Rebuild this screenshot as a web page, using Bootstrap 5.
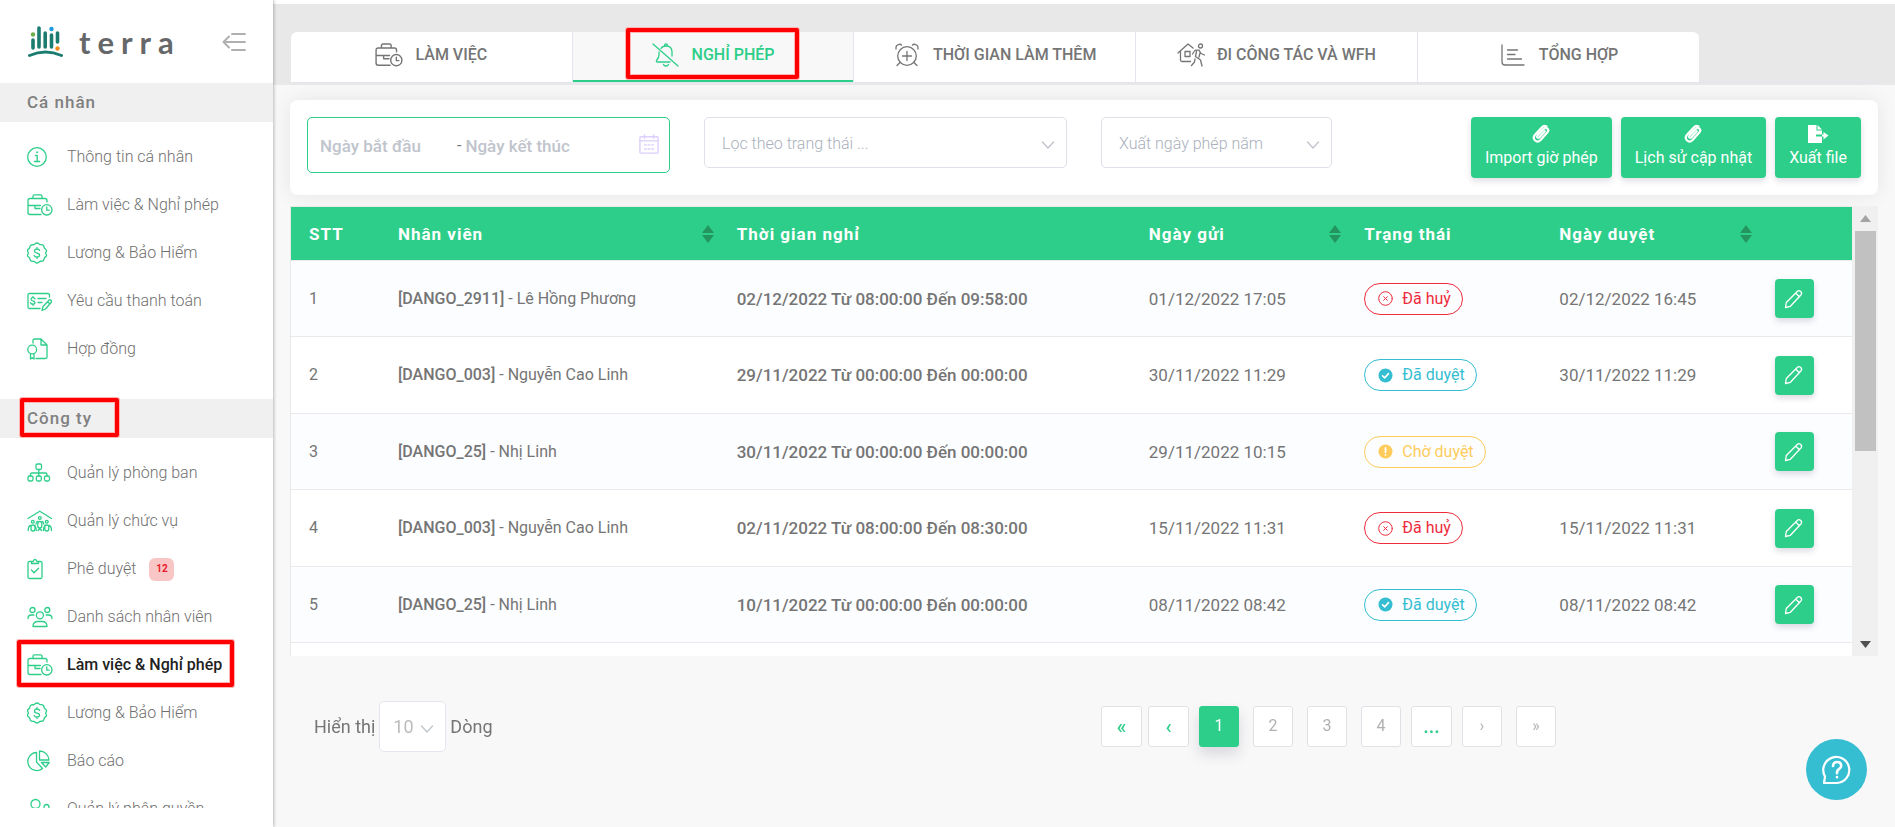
<!DOCTYPE html>
<html lang="vi">
<head>
<meta charset="utf-8">
<meta name="viewport" content="width=device-width, initial-scale=1">
<title>Terra - Nghỉ phép</title>
<link href="https://cdn.jsdelivr.net/npm/bootstrap@5.3.0/dist/css/bootstrap.min.css" rel="stylesheet">
<style>
:root{--green:#2dce89;--line:#e4e6ef;--txt:#757575}
body{font-family:Roboto,"Noto Sans",sans-serif;font-size:16px;line-height:24px;color:var(--txt);background:#f8f8f8}
svg{fill:none;stroke:currentColor;stroke-linecap:round;stroke-linejoin:round;flex:none}
/* sidebar */
.sidebar{width:273px;padding-bottom:19px;box-shadow:1px 0 3px rgba(0,0,0,.25);z-index:2}
.brand{height:83px;padding:0 27px}
.brand-mark{color:#1b7d70}
.wordmark{font:700 31px/36px Lato,sans-serif;color:#666769;letter-spacing:7px}
.collapser{color:#b0b0b0}
.group-title{height:39px;background:#f0f0f0;padding:0 27px 2px;font-size:17px;font-weight:500;color:#808080;letter-spacing:1px}
.side-list{padding:11px 0 26px}
.side-link{height:48px;padding-left:27px;color:#707070;font-weight:300;text-decoration:none}
.side-link svg{width:26px;height:22px;margin-right:14px;color:var(--green);stroke-width:1.3}
.side-link.current{color:#222;font-weight:500}
.count{margin-left:13px;width:25px;height:23px;border-radius:6px;background:#f9c6c6;color:#e8192c;font-size:10px;font-weight:700}
.marker::after{content:"";position:absolute;border:4px solid #f00;border-radius:2px;box-shadow:0 0 0 1px #ffb3b3,inset 0 0 0 1px #ffb3b3;pointer-events:none}
.marker-group::after{left:20px;top:-1px;width:99px;height:39px}
.marker-link::after{left:17px;top:-1px;width:217px;height:47px}
.marker-tab::after{inset:-4px 54px 3px 53px}
/* tabs */
.topbar{background:#e8e8e8;border-top:4px solid #fff;height:85px;padding:28px 17px 0 18px}
.tabs{border-bottom:1px solid var(--line)}
.tab{width:17.75%;height:50px;background:#fff;border:0;border-right:1px solid var(--line);color:var(--txt);font-weight:500;padding:0 0 5px;gap:12px}
.tab svg{width:28px;height:24px;stroke-width:1.3}
.tab:first-child{border-top-left-radius:6px}
.tab:last-child{border-top-right-radius:6px;border-right:0}
.tab.active{background:#f8f8f8;color:var(--green);box-shadow:inset 0 -2px 0 var(--green)}
/* filters */
.content{padding:15px 17px 0}
.filters{background:#fff;border-radius:8px;height:95px;box-shadow:0 0 20px rgba(0,0,0,.08);padding-top:17px}
.fcol{padding:0 17px}
.range{height:56px;border:1px solid var(--green);border-radius:5px;padding:2px 10px 0 12px}
.range input{border:0;outline:0;background:none;padding:0;min-width:0;font-size:17px;font-weight:500;color:#606266}
.range input::placeholder{color:#c0c4cc;opacity:1}
.in-start{width:137px}
.in-end{width:130px}
.cal{color:#dccffc}
.pick{height:51px;border-color:#dfe0e8;border-radius:5px;padding:2px 36px 0 17px;font-size:16px;font-weight:300;color:#a9b0bc;background-position:right 11px center;background-size:14px 14px;background-image:url("data:image/svg+xml,%3Csvg xmlns='http://www.w3.org/2000/svg' viewBox='0 0 14 14' fill='none' stroke='%23c0c4cc' stroke-width='1.3' stroke-linecap='round'%3E%3Cpath d='M1.500 6l5.500 6 5.500-6'/%3E%3C/svg%3E")}
.btn-act{background:var(--green);color:#fff;border:0;border-radius:4px;height:61px;padding:7px 14px 0;gap:2px;box-shadow:0 3px 6px rgba(50,50,93,.16);font-weight:400;line-height:24px}
.btn-act:hover{background:#27b979;color:#fff}
.solid{fill:#fff;stroke:none}
.acts{gap:9px;padding-right:17px}
/* table */
.table-zone{margin-top:11px;background:#f0f0f0}
.viewport{max-height:450px;overflow-y:auto;scrollbar-width:none;background:#fff;border-left:1px solid #e8e8e8;border-top:1px solid #e8e8e8}
.viewport::-webkit-scrollbar{display:none}
.leave{table-layout:fixed;margin:0;color:var(--txt)}
.leave th,.leave td{vertical-align:middle;padding:1px 5px 0 18px;border-bottom:1px solid #e8eaee;color:inherit;background:none;box-shadow:none;white-space:nowrap}
.leave thead th{height:53px;background:var(--green);color:#fff;font-size:17px;font-weight:700;letter-spacing:1px;border-bottom-color:#e8eaee}
.leave tbody tr{height:76px}
.leave tbody tr:nth-child(even){height:77px}
.leave tbody tr:nth-child(odd){background:#fcfdff}
.leave b{font-weight:500}
.leave .when{font-size:17px}
.leave .span-time{font-size:17px;font-weight:500}
.sorter{width:12px;height:18px;fill:#24955f;stroke:none}
.status{height:32px;border:1px solid;border-radius:16px;padding:0 11px 0 13px;gap:9px}
.status svg{width:15px;height:15px}
.st-red{color:#ee2c3c}.st-blue{color:#35bdd1}.st-gold{color:#ffcc5c}
.edit{width:39px;height:39px;padding:0;border:0;border-radius:4px;background:var(--green);color:#fff;box-shadow:0 3px 6px rgba(50,50,93,.18)}
.rail{width:26px;padding:9px 2px 8px 3px}
.rail i{width:11px;height:7px;clip-path:polygon(50% 0,100% 100%,0 100%);background:#a3a3a3}
.rail i.down{transform:rotate(180deg);background:#505050}
.thumb{background:#c1c1c1;width:21px;height:220px;margin-top:9px}
/* footer */
.pager{margin-top:45px}
.rows-label{font-size:18px}
.rows-pick{width:67px;font-size:18px;padding:0 0 0 13px;border-color:#e4e6ef;font-weight:400;color:#bbb}
.pages{gap:6px;margin-top:5px;padding-left:17px}
.pg{width:40px;height:41px;border:1px solid #dee2e6;border-radius:3px;background:#fff;color:#b0b0b0;padding:0;line-height:38px;text-align:center;text-decoration:none}
.pg.go{width:41px;color:var(--green);font-size:20px;font-weight:500}
.pg.on{background:var(--green);border-color:var(--green);color:#fff;box-shadow:0 7px 14px rgba(50,50,93,.16)}
.help{right:28px;bottom:27px;width:61px;height:61px;border:0;border-radius:50%;background:#35bdd1;color:#fff}
</style>
</head>
<body>
<svg class="d-none">
  <symbol id="i-case" viewBox="0 0 26 22"><path d="M6 4.500V2.200Q6 .8 7.400 .8h6.200Q15 .8 15 2.200v2.300M20 8V6.500Q20 4.500 18 4.500H3Q1 4.500 1 6.500v12Q1 20.500 3 20.500h11M1 11.500h12.500M8 11.500v3h5M3.500 18.500"/><circle cx="19.800" cy="15.800" r="5.200"/><path d="M19.800 13v3.200h2.400"/></symbol>
  <symbol id="i-coin" viewBox="0 0 26 22"><path d="M10 1c1.500 0 1.800 1.300 3 1.600s2-.3 3.200.7.400 2 1.300 2.900 1.900 1.100 2 2.300-.8 1.300-.8 2.500.9 1.400.8 2.600-1.400 1.200-2 2.200-.2 2-1.300 2.900-2 .300-3.200.7-1.500 1.600-3 1.600-1.800-1.300-3-1.600-2 .3-3.200-.7-.4-2-1.300-2.900-1.900-1.100-2-2.300.8-1.300.8-2.500-.9-1.400-.8-2.600 1.400-1.200 2-2.200.2-2 1.300-2.900 2-.3 3.200-.7S8.500 1 10 1z"/><path d="M12.600 8.500c-.3-1-1.200-1.500-2.600-1.500-3 0-3.500 3.300-.5 3.900 4 .7 4 4.100.5 4.100-1.500 0-2.600-.6-2.900-1.700M10 5.500V7M10 15v1.500"/></symbol>
  <symbol id="i-sort" viewBox="0 0 12 18"><path d="M6 0l6 8H0zM6 18l6-8H0z"/></symbol>
  <symbol id="i-x" viewBox="0 0 15 15"><circle cx="7.500" cy="7.500" r="6.800"/><path d="M5.700 5.700l3.600 3.600M9.300 5.700L5.700 9.300"/></symbol>
  <symbol id="i-ok" viewBox="0 0 15 15"><circle cx="7.500" cy="7.500" r="7" fill="currentColor" stroke="none"/><path d="M4.500 7.700l2.200 2.200 3.800-4.300" stroke="#fff" stroke-width="1.600"/></symbol>
  <symbol id="i-wait" viewBox="0 0 15 15"><circle cx="7.500" cy="7.500" r="7" fill="currentColor" stroke="none"/><path d="M7.500 4v4.200M7.500 10.800v.1" stroke="#fff" stroke-width="1.800"/></symbol>
  <symbol id="i-pen" viewBox="0 0 20 20"><path stroke-width="1.300" d="M1.500 18.500l.8-5L13.500 2.200q1.500-1.300 3.200.3t.4 3.200L6.400 17.300zM11.800 4.200l3.700 3.600"/></symbol>
  <symbol id="i-clip" viewBox="0 0 18 20"><path d="M12.800 7.200l-5.400 6.100q-1 1-1.900.2t0-1.900L11.600 5q2-2 3.800-.4t.1 3.600L8.600 16q-2.900 2.800-5.500.5T2.800 11L10 3.200Q12 1 14.500 2.500" stroke-width="2.200"/></symbol>
</svg>

<div class="d-flex vh-100">
  <aside class="sidebar bg-white d-flex flex-column flex-shrink-0 position-relative">
    <div class="brand d-flex align-items-center flex-shrink-0">
      <svg class="brand-mark" width="36" height="34" viewBox="27 22 36 34" stroke-width="3.600"><path d="M33 37v8M39 25v19M45.200 30v14M51.500 32v12M57.500 30v9"/><path d="M29.500 52.500q16-7 32 0" stroke-width="3"/><g stroke="none"><circle cx="33" cy="31.500" r="2.200" fill="#6ab04c"/><circle cx="51.500" cy="26" r="2.200" fill="#1a9be0"/><circle cx="57.500" cy="45.500" r="2.200" fill="#f28c1e"/></g></svg>
      <span class="wordmark ms-3">terra</span>
      <button class="collapser btn p-0 border-0 ms-auto" type="button" aria-label="Thu gọn"><svg width="24" height="20" viewBox="0 0 24 20"><path stroke-width="2" d="M10 2h13M2 10h21M10 18h13M7 4.500L1.500 10 7 15.500"/></svg></button>
    </div>
    <nav class="overflow-hidden flex-grow-1">
      <div class="group-title d-flex align-items-center">Cá nhân</div>
      <div class="side-list">
        <a href="#" class="side-link d-flex align-items-center"><svg viewBox="0 0 26 22"><circle cx="10" cy="11" r="9.300"/><path d="M8.500 9.500h1.700v6M7.500 15.500h5.200"/><circle cx="10" cy="6.300" r=".7" fill="currentColor" stroke-width=".6"/></svg>Thông tin cá nhân</a>
        <a href="#" class="side-link d-flex align-items-center"><svg><use href="#i-case"/></svg>Làm việc &amp; Nghỉ phép</a>
        <a href="#" class="side-link d-flex align-items-center"><svg><use href="#i-coin"/></svg>Lương &amp; Bảo Hiểm</a>
        <a href="#" class="side-link d-flex align-items-center"><svg viewBox="0 0 26 22"><path d="M22.500 7V5q0-1.500-1.500-1.500H2.500Q1 3.500 1 5v12q0 1.500 1.500 1.500H13M8 9c-.3-1-1-1.300-2-1.300-2.400 0-2.700 2.600-.3 3.100 3 .5 2.900 3.300.1 3.300-1.200 0-2-.5-2.300-1.400M6 6.500v1.200M6 14.100v1.300M11 8.500h8M11 12.500h4M15 20.500l1-4 6-6.200q1-1 2 0t.3 2L18.500 19zM20.500 11.800l2.300 2"/></svg>Yêu cầu thanh toán</a>
        <a href="#" class="side-link d-flex align-items-center"><svg viewBox="0 0 26 22"><path d="M6 5V2.500Q6 1 7.500 1H14l6 6v12q0 1.500-1.500 1.500H9M14 1v6h6"/><circle cx="5.200" cy="11.500" r="4.400"/><path d="M3.500 15.800V21l1.700-1.300L7 21v-5.200"/></svg>Hợp đồng</a>
      </div>
      <div class="group-title marker marker-group position-relative d-flex align-items-center">Công ty</div>
      <div class="side-list">
        <a href="#" class="side-link d-flex align-items-center"><svg viewBox="0 0 26 22"><rect x="9" y="2" width="5.500" height="5.500" rx="1.500"/><rect x="1" y="14" width="5" height="5" rx="1.500"/><rect x="9.300" y="14" width="5" height="5" rx="1.500"/><rect x="17.500" y="14" width="5" height="5" rx="1.500"/><path d="M11.800 7.500V14M3.500 14v-1.500q0-1.500 1.500-1.500h13.500q1.500 0 1.500 1.500V14"/></svg>Quản lý phòng ban</a>
        <a href="#" class="side-link d-flex align-items-center"><svg viewBox="0 0 26 22"><path d="M1 8.500L12.800 1.200 24.500 8.500"/><circle cx="12.800" cy="8" r="1.400"/><circle cx="5.800" cy="11.800" r="1.400"/><circle cx="19.800" cy="11.800" r="1.400"/><rect x="10.800" y="11.500" width="4" height="6.500" rx="2"/><rect x="4" y="15" width="4" height="6" rx="2"/><rect x="17.800" y="15" width="4" height="6" rx="2"/><path d="M1.200 20.500q0-4.500 2.500-5M9.200 20.500q0-3-1.300-5M9 14q.2-2.200 1.600-2.500M24.500 20.500q0-4.500-2.500-5M16.500 20.500q0-3 1.300-5M16.800 14q-.2-2.200-1.800-2.500M11 20.500l1.800-2 1.800 2"/></svg>Quản lý chức vụ</a>
        <a href="#" class="side-link d-flex align-items-center"><svg viewBox="0 0 26 22"><path d="M4 3.500H2.500Q1 3.500 1 5v14q0 1.500 1.500 1.500h11Q15 20.500 15 19V5q0-1.500-1.500-1.500H12M4.500 5.500v-2h1.700q.3-2 1.800-2t1.800 2h1.700v2zM4.500 12l2.500 2.700 4.500-4.500"/></svg>Phê duyệt<span class="count d-flex align-items-center justify-content-center">12</span></a>
        <a href="#" class="side-link d-flex align-items-center"><svg viewBox="0 0 26 22"><circle cx="5.500" cy="4" r="2.500"/><circle cx="20.300" cy="4" r="2.500"/><circle cx="12.900" cy="9.300" r="3.500"/><path d="M1 12.500q0-3.500 3.500-3.500H7M25 12.500q0-3.500-3.500-3.500h-2.300M6 20.500q0-5 5-5h4q5 0 5 5z"/></svg>Danh sách nhân viên</a>
        <a href="#" class="side-link current marker marker-link position-relative d-flex align-items-center"><svg><use href="#i-case"/></svg>Làm việc &amp; Nghỉ phép</a>
        <a href="#" class="side-link d-flex align-items-center"><svg><use href="#i-coin"/></svg>Lương &amp; Bảo Hiểm</a>
        <a href="#" class="side-link d-flex align-items-center"><svg viewBox="0 0 26 22"><path d="M9.500 2.500a9 9 0 1 0 6 16L9.500 12zM12.500 1v9h9.500a9.500 9.500 0 0 0-9.500-9zM14.500 12.500h7.700l-3.500 4.500z"/></svg>Báo cáo</a>
        <a href="#" class="side-link d-flex align-items-center"><svg viewBox="0 0 26 22"><circle cx="8.500" cy="6" r="4.500"/><path d="M17 12V9.500q0-3 2.500-3t2.500 3V12M2 21q0-7 6.500-7 4 0 5 3"/></svg>Quản lý phân quyền</a>
      </div>
    </nav>
  </aside>

  <main class="flex-grow-1 overflow-hidden position-relative">
    <div class="topbar">
      <div class="tabs d-flex" role="tablist">
        <button class="tab d-flex align-items-center justify-content-center" role="tab" type="button"><svg><use href="#i-case"/></svg>LÀM VIỆC</button>
        <button class="tab active marker marker-tab position-relative d-flex align-items-center justify-content-center" role="tab" type="button"><svg viewBox="0 0 28 24"><path d="M1 1l25 22M9 5.500Q10.500 3 14 3q6 0 6 6v4M7 9v3q0 2.500-2.500 5.500Q4 19 5.500 19H18M12.500 2.500Q12.500 1 14 1t1.500 1.500M11.500 21.500q.5 1.500 2.500 1.500t2.500-1.500"/></svg>NGHỈ PHÉP</button>
        <button class="tab d-flex align-items-center justify-content-center" role="tab" type="button"><svg viewBox="0 0 28 24"><circle cx="14" cy="13" r="9.300"/><path d="M14 8.500v9M9.500 13h9M3 6q-.5-4 3-4.700 2-.3 2.500.9M25 6q.5-4-3-4.700-2-.3-2.500.9M7 19.500l-3 3M21 19.500l3 3"/></svg>THỜI GIAN LÀM THÊM</button>
        <button class="tab d-flex align-items-center justify-content-center" role="tab" type="button"><svg viewBox="0 0 28 24"><path d="M1 10L11 1l5 4M3.500 8.500V17q0 1.500 1.500 1.500h8.500"/><rect x="8" y="8.500" width="5" height="5"/><circle cx="23.500" cy="3" r="2"/><path d="M15.500 11l2-3q.5-.8 1.500-.8h3l2 3.300 3.500 1.500M19.500 8.500l-1 5 5 3.500 1.500 6M18 16l-.5 3-3 3.500M23 10l-1 4"/></svg>ĐI CÔNG TÁC VÀ WFH</button>
        <button class="tab d-flex align-items-center justify-content-center" role="tab" type="button"><svg viewBox="0 0 28 24"><path d="M3 2v17q0 3 3 3h19M8.500 7h10M8.500 11.500h7.500M8.500 16h14"/></svg>TỔNG HỢP</button>
      </div>
    </div>

    <div class="content">
      <form class="filters d-flex align-items-start">
        <div class="fcol col-3">
          <div class="range d-flex align-items-center">
            <input class="in-start" type="text" placeholder="Ngày bắt đầu" aria-label="Ngày bắt đầu"><span class="me-1">-</span>
            <input class="in-end" type="text" placeholder="Ngày kết thúc" aria-label="Ngày kết thúc">
            <svg class="cal ms-auto mb-1" width="20" height="22" viewBox="0 0 22 22" stroke-width="1.500"><rect x="1" y="3" width="20" height="18" rx="1"/><path d="M1 7.500h20M6 1v4M16 1v4M6 12h2M10 12h2M14 12h2M6 16.500h2M10 16.500h2M14 16.500h2"/></svg>
          </div>
        </div>
        <div class="fcol col-3"><select class="form-select pick" aria-label="Lọc theo trạng thái"><option>Lọc theo trạng thái ...</option></select></div>
        <div class="fcol col-2"><select class="form-select pick" aria-label="Xuất ngày phép năm"><option>Xuất ngày phép năm</option></select></div>
        <div class="acts d-flex ms-auto">
          <button type="button" class="btn btn-act d-flex flex-column align-items-center"><svg width="18" height="20"><use href="#i-clip"/></svg>Import giờ phép</button>
          <button type="button" class="btn btn-act d-flex flex-column align-items-center"><svg width="18" height="20"><use href="#i-clip"/></svg>Lịch sử cập nhật</button>
          <button type="button" class="btn btn-act d-flex flex-column align-items-center"><svg class="solid" width="22" height="20" viewBox="0 0 22 20"><path d="M1 1h8.500v5.500H15V10.500H9v2h6V19H1zM10.500 1L15 5.500h-4.500zM16.500 8l5 3.500-5 4v-3h-1.500v-2h1.500z"/></svg>Xuất file</button>
        </div>
      </form>

      <div class="table-zone d-flex">
        <div class="viewport flex-grow-1">
          <table class="leave table">
            <colgroup><col style="width:5.7%"><col style="width:21.7%"><col style="width:26.4%"><col style="width:13.8%"><col style="width:12.5%"><col style="width:13.8%"><col style="width:6.1%"></colgroup>
            <thead><tr>
              <th scope="col">STT</th>
              <th scope="col"><div class="d-flex align-items-center justify-content-between">Nhân viên<svg class="sorter"><use href="#i-sort"/></svg></div></th>
              <th scope="col">Thời gian nghỉ</th>
              <th scope="col"><div class="d-flex align-items-center justify-content-between">Ngày gửi<svg class="sorter"><use href="#i-sort"/></svg></div></th>
              <th scope="col">Trạng thái</th>
              <th scope="col"><div class="d-flex align-items-center justify-content-between">Ngày duyệt<svg class="sorter"><use href="#i-sort"/></svg></div></th>
              <th scope="col" aria-label="Thao tác"></th>
            </tr></thead>
            <tbody>
              <tr><td>1</td><td><b>[DANGO_2911]</b> - Lê Hồng Phương</td><td class="span-time">02/12/2022 Từ 08:00:00 Đến 09:58:00</td><td class="when">01/12/2022 17:05</td><td><span class="status st-red d-inline-flex align-items-center"><svg><use href="#i-x"/></svg>Đã huỷ</span></td><td class="when">02/12/2022 16:45</td><td><button class="edit d-flex align-items-center justify-content-center" type="button" aria-label="Sửa"><svg width="20" height="20"><use href="#i-pen"/></svg></button></td></tr>
              <tr><td>2</td><td><b>[DANGO_003]</b> - Nguyễn Cao Linh</td><td class="span-time">29/11/2022 Từ 00:00:00 Đến 00:00:00</td><td class="when">30/11/2022 11:29</td><td><span class="status st-blue d-inline-flex align-items-center"><svg><use href="#i-ok"/></svg>Đã duyệt</span></td><td class="when">30/11/2022 11:29</td><td><button class="edit d-flex align-items-center justify-content-center" type="button" aria-label="Sửa"><svg width="20" height="20"><use href="#i-pen"/></svg></button></td></tr>
              <tr><td>3</td><td><b>[DANGO_25]</b> - Nhị Linh</td><td class="span-time">30/11/2022 Từ 00:00:00 Đến 00:00:00</td><td class="when">29/11/2022 10:15</td><td><span class="status st-gold d-inline-flex align-items-center"><svg><use href="#i-wait"/></svg>Chờ duyệt</span></td><td></td><td><button class="edit d-flex align-items-center justify-content-center" type="button" aria-label="Sửa"><svg width="20" height="20"><use href="#i-pen"/></svg></button></td></tr>
              <tr><td>4</td><td><b>[DANGO_003]</b> - Nguyễn Cao Linh</td><td class="span-time">02/11/2022 Từ 08:00:00 Đến 08:30:00</td><td class="when">15/11/2022 11:31</td><td><span class="status st-red d-inline-flex align-items-center"><svg><use href="#i-x"/></svg>Đã huỷ</span></td><td class="when">15/11/2022 11:31</td><td><button class="edit d-flex align-items-center justify-content-center" type="button" aria-label="Sửa"><svg width="20" height="20"><use href="#i-pen"/></svg></button></td></tr>
              <tr><td>5</td><td><b>[DANGO_25]</b> - Nhị Linh</td><td class="span-time">10/11/2022 Từ 00:00:00 Đến 00:00:00</td><td class="when">08/11/2022 08:42</td><td><span class="status st-blue d-inline-flex align-items-center"><svg><use href="#i-ok"/></svg>Đã duyệt</span></td><td class="when">08/11/2022 08:42</td><td><button class="edit d-flex align-items-center justify-content-center" type="button" aria-label="Sửa"><svg width="20" height="20"><use href="#i-pen"/></svg></button></td></tr>
              <tr><td></td><td></td><td></td><td></td><td></td><td></td><td></td></tr>
            </tbody>
          </table>
        </div>
        <div class="rail d-flex flex-column align-items-center flex-shrink-0" aria-hidden="true"><i></i><div class="thumb"></div><i class="down mt-auto"></i></div>
      </div>

      <div class="pager row g-0">
        <div class="col-6 d-flex align-items-center align-self-start rows-label">
          <label for="rows" class="ms-4 me-1">Hiển thị</label>
          <select id="rows" class="form-select pick rows-pick"><option>10</option></select>
          <span class="ms-1">Dòng</span>
        </div>
        <nav class="col-6" aria-label="Phân trang"><div class="pages d-flex">
          <a href="#" class="pg go" aria-label="Trang đầu">«</a><a href="#" class="pg go" aria-label="Trang trước">‹</a><a href="#" class="pg on mx-1">1</a><a href="#" class="pg mx-1">2</a><a href="#" class="pg mx-1">3</a><a href="#" class="pg mx-1">4</a><a href="#" class="pg go">...</a><a href="#" class="pg mx-1">›</a><a href="#" class="pg mx-1">»</a>
        </div></nav>
      </div>
    </div>
    <button class="help position-absolute d-flex align-items-center justify-content-center" type="button" aria-label="Trợ giúp"><svg width="30" height="30" viewBox="0 0 30 30" stroke-width="2.200"><path d="M2 28l1-6.500A13 13 0 1 1 15 28z"/><path d="M11 11q.3-4 4.200-4t4 3.800q0 2-2.200 3.300t-2 4M15 22v.3" stroke-width="2.600"/></svg></button>
  </main>
</div>
<script src="https://cdn.jsdelivr.net/npm/bootstrap@5.3.0/dist/js/bootstrap.bundle.min.js"></script>
</body>
</html>
